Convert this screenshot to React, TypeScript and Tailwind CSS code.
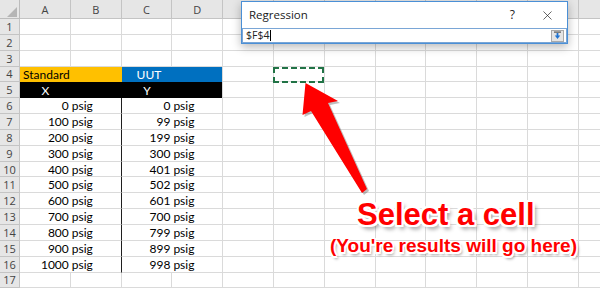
import { X as CloseIcon } from 'lucide-react';

const COLS = ['A', 'B', 'C', 'D', 'E', 'F', 'G', 'H', 'I', 'J', 'K', ''];
const ROWS = Array.from({ length: 17 }, (_, i) => i + 1);
const XS = [0, 100, 200, 300, 400, 500, 600, 700, 800, 900, 1000];
const YS = [0, 99, 199, 300, 401, 502, 601, 700, 799, 899, 998];

const cellFont = "font-['Lato','Open_Sans',sans-serif] text-[12px] leading-none";

function Cell({ row, col }: { row: number; col: number }) {
  // row 4: header colours
  if (row === 4 && col < 4) {
    if (col === 0)
      return <div className={`bg-[#ffc000] flex items-center pl-[3px] pt-[1px] text-black ${cellFont}`}>Standard</div>;
    if (col === 1) return <div className="bg-[#ffc000]" />;
    if (col === 2)
      return <div className={`bg-[#0070c0] flex items-center pl-[15px] pt-[1px] text-white ${cellFont}`}>UUT</div>;
    return <div className="bg-[#0070c0] border-r border-[#d9d9d9]" />;
  }
  if (row === 5 && col < 4) {
    const label = col === 0 ? 'X' : col === 2 ? 'Y' : '';
    return (
      <div className={`bg-black flex items-center justify-center pt-[1px] text-white ${cellFont} ${col === 3 ? 'border-r border-[#d9d9d9]' : ''}`}>
        {label}
      </div>
    );
  }
  if (row >= 6 && row <= 16 && col < 4) {
    const i = row - 6;
    if (col === 0 || col === 2)
      return (
        <div className={`border-b border-[#dadada] flex items-center justify-end pr-[2px] pt-[1px] text-black ${cellFont}`}>
          {col === 0 ? XS[i] : YS[i]}
        </div>
      );
    return (
      <div
        className={`border-b flex items-center pl-[1px] pt-[1px] text-black ${cellFont} ${
          col === 1 ? 'border-r border-r-[#1f1f1f] border-b-[#dadada]' : 'border-r border-[#dadada]'
        }`}
      >
        psig
      </div>
    );
  }
  return <div className="border-r border-b border-[#dadada]" />;
}

export default function App() {
  return (
    <div className="relative w-[600px] h-[292px] overflow-hidden bg-white">
      <div className="grid grid-cols-[20px_repeat(12,50.8px)] grid-rows-[19px_repeat(17,15.85px)]">
        {/* corner */}
        <div className="bg-[#e6e6e6] border-r border-b border-[#bcbcbc] relative">
          <svg width="20" height="19" className="absolute left-0 top-0">
            <polygon points="17,7 17,17 7,17" fill="#b5b5b5" />
          </svg>
        </div>
        {COLS.map((c, i) => (
          <div
            key={i}
            className="bg-[#e6e6e6] border-r border-b border-[#c4c4c4] flex items-center justify-center text-[11px] text-[#444] font-['Open_Sans',sans-serif] pt-[2px]"
          >
            {c}
          </div>
        ))}
        {ROWS.map((r) => [
          <div
            key={`h${r}`}
            className="bg-[#e6e6e6] border-r border-b border-[#c4c4c4] flex items-center justify-center text-[11px] text-[#444] font-['Open_Sans',sans-serif] leading-none"
          >
            {r}
          </div>,
          ...COLS.map((_, ci) => <Cell key={`${r}-${ci}`} row={r} col={ci} />),
        ])}
      </div>

      {/* selected target cell */}
      <div className="absolute left-[273px] top-[67px] w-[51px] h-[16px] border-2 border-dashed border-[#217346]" />

      {/* Regression dialog */}
      <div className="absolute left-[241px] top-[1px] w-[327px] h-[43px] bg-white border border-[#4a8fd6] shadow-[0_3px_9px_rgba(0,0,0,0.28)] flex flex-col">
        <div className="flex items-center h-[26px] pl-[7px]">
          <span className="text-[11.5px] text-[#1a1a1a] font-['Open_Sans',sans-serif]">Regression</span>
          <span className="ml-auto mr-[25px] text-[12px] text-[#222] font-['Open_Sans',sans-serif]">?</span>
          <CloseIcon size={15} strokeWidth={1.1} className="mr-[12px] text-[#222]" />
        </div>
        <div className="mx-0 h-[15px] border border-[#7aa6d6] flex items-center pl-[3px] pr-[2px]">
          <span className="text-[10.5px] text-[#222] font-['Open_Sans',sans-serif] leading-none">$F$4</span>
          <span className="w-px h-[11px] bg-black ml-[1px]" />
          <div className="ml-auto w-[13px] h-[12px] bg-[#e4e4e4] border border-[#a9a9a9] flex items-center justify-center">
            <svg width="9" height="9" viewBox="0 0 9 9">
              <rect x="1" y="0.5" width="7" height="1.2" fill="#555" />
              <rect x="3.6" y="2" width="1.8" height="3" fill="#1e73d2" />
              <polygon points="1.8,4.6 7.2,4.6 4.5,8" fill="#1e73d2" />
            </svg>
          </div>
        </div>
      </div>

      {/* arrow */}
      <svg width="600" height="292" className="absolute left-0 top-0 pointer-events-none">
        <polygon
          points="307,85 340,103 330,105 369,191 364,195 313,113 304.5,117"
          fill="#000"
          opacity="0.25"
        />
        <polygon points="305.5,83 338,101 328,103 367,189 362,193 311,111 302.5,115" fill="#ff0000" />
      </svg>

      {/* callout text */}
      <div className="absolute left-[357px] top-[199px] text-[31px] leading-none font-bold text-[#ff0000] font-['Liberation_Sans',Arial,sans-serif] [text-shadow:-2px_-2px_0_#fff,2px_-2px_0_#fff,-2px_2px_0_#fff,2px_2px_0_#fff,0_-2px_0_#fff,0_2px_0_#fff,-2px_0_0_#fff,2px_0_0_#fff,3px_4px_4px_rgba(0,0,0,0.45)] whitespace-nowrap">
        Select a cell
      </div>
      <div className="absolute left-[330px] top-[236px] text-[19px] leading-none font-bold text-[#ff0000] font-['Liberation_Sans',Arial,sans-serif] [text-shadow:-1.5px_-1.5px_0_#fff,1.5px_-1.5px_0_#fff,-1.5px_1.5px_0_#fff,1.5px_1.5px_0_#fff,0_-1.5px_0_#fff,0_1.5px_0_#fff,-1.5px_0_0_#fff,1.5px_0_0_#fff,2px_3px_3px_rgba(0,0,0,0.45)] whitespace-nowrap">
        (You're results will go here)
      </div>
    </div>
  );
}
